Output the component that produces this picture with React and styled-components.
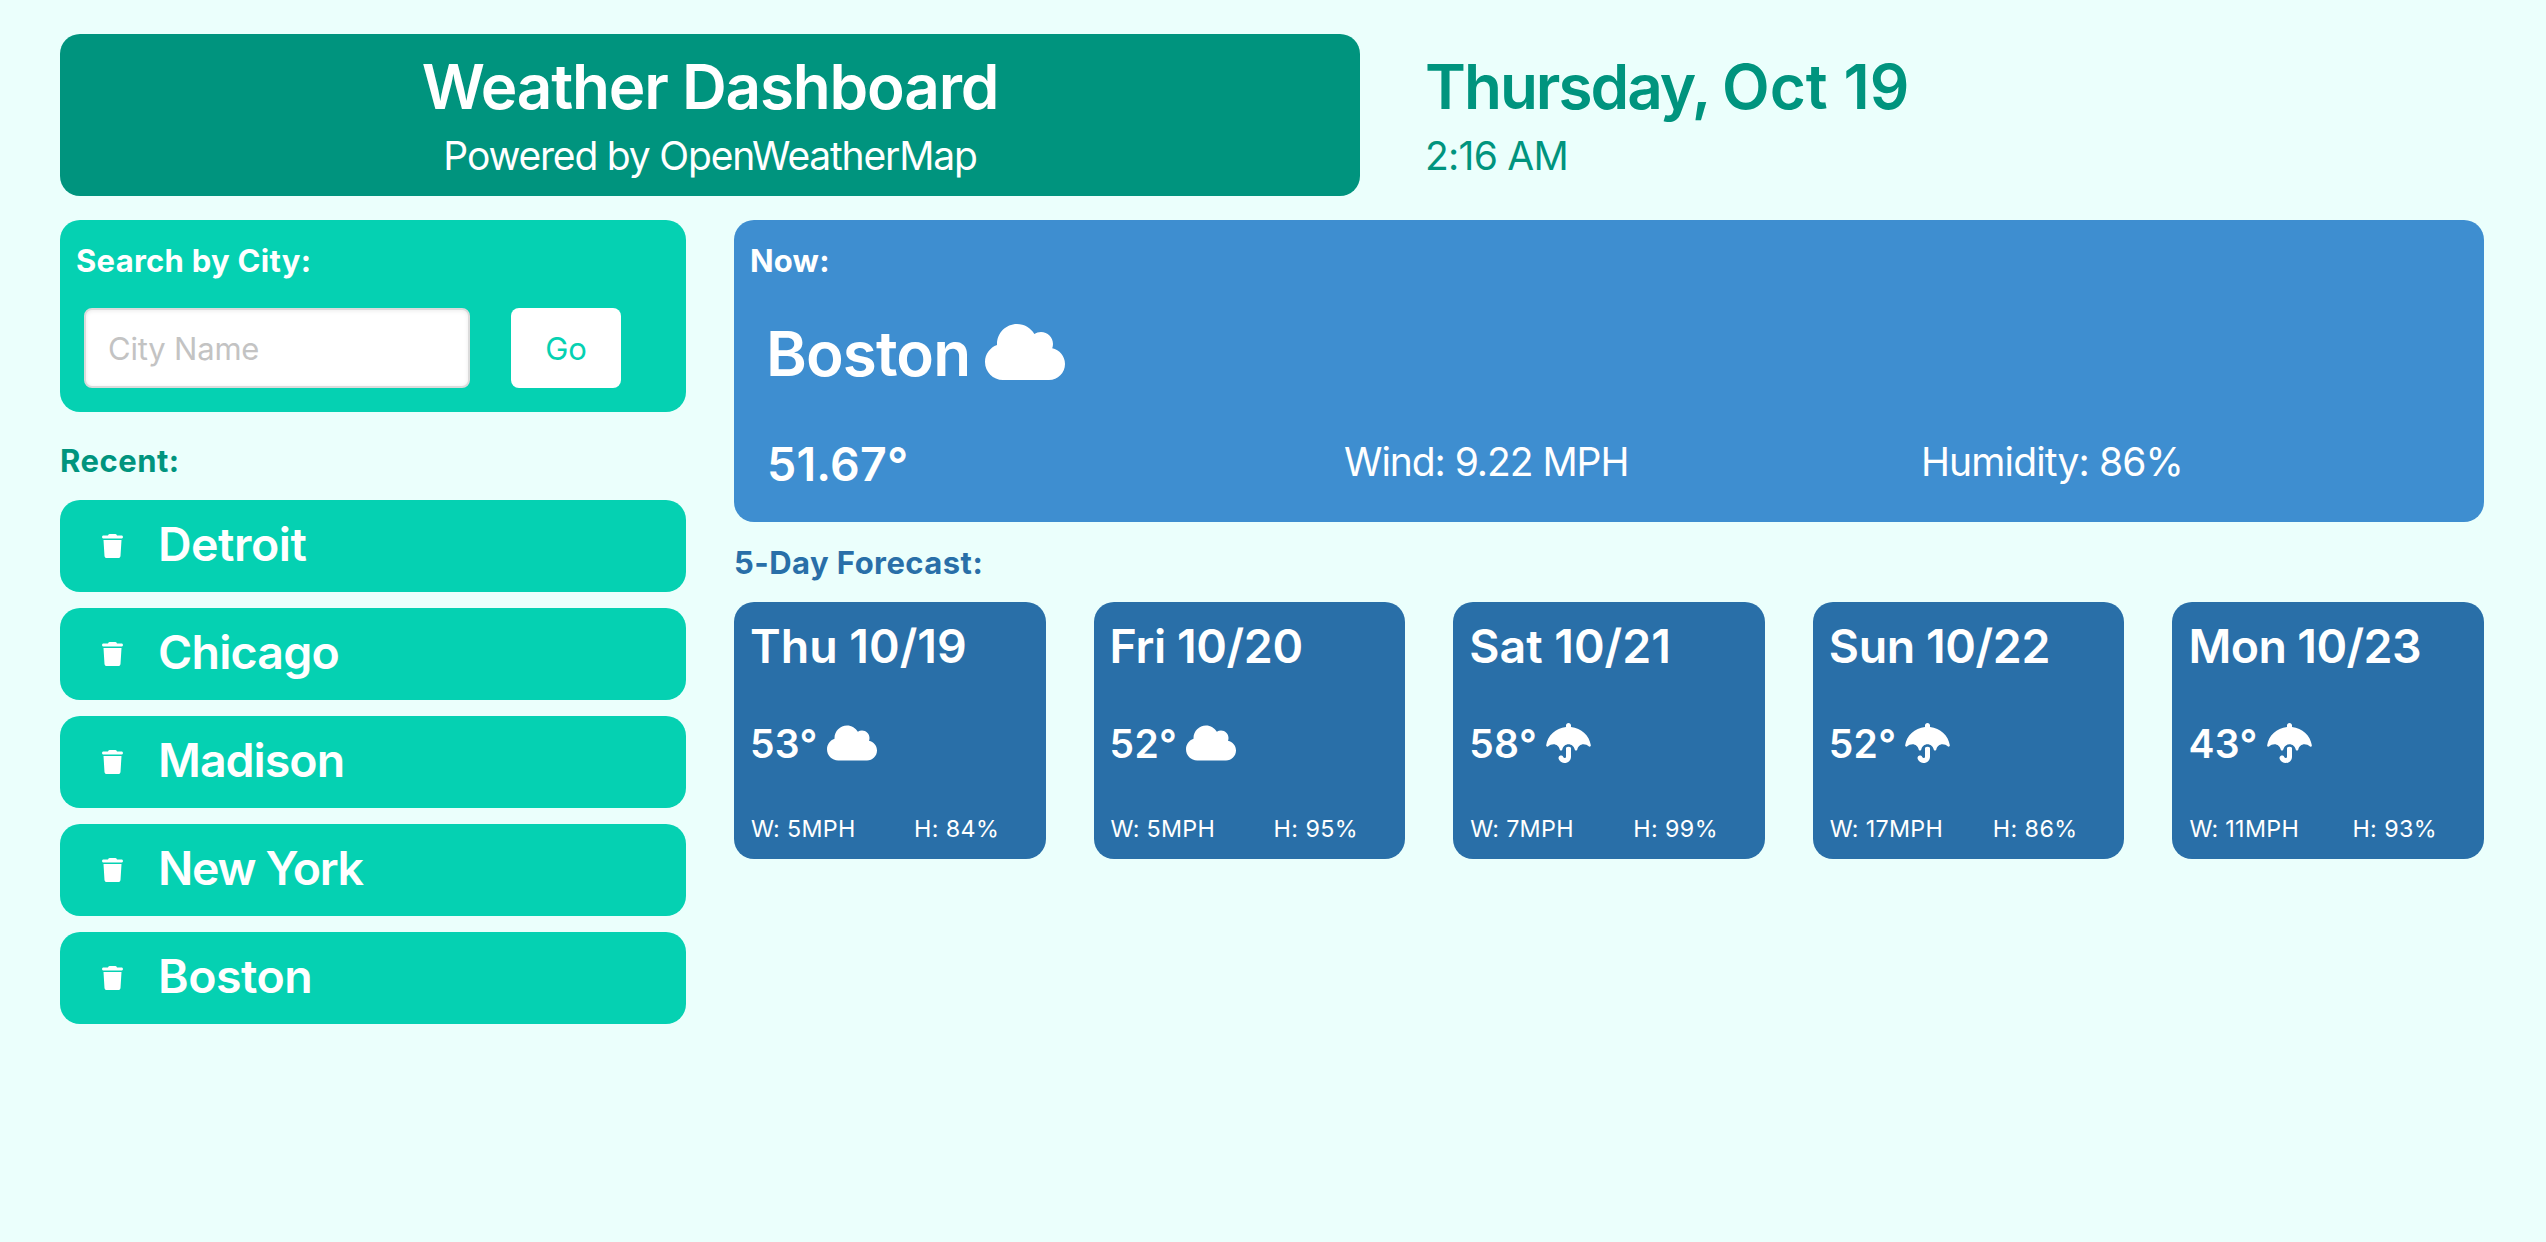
import React from "react";
import styled, { createGlobalStyle } from "styled-components";
import { FaCloud, FaUmbrella, FaTrash } from "react-icons/fa6";

const color = {
  page: "#ebfffc",
  primary: "#05d1b2",
  primaryDark: "#00947e",
  info: "#3e8ed0",
  infoDark: "#296fa8",
};

const GlobalStyle = createGlobalStyle`
  * { box-sizing: border-box; margin: 0; }
  body {
    min-height: 100vh;
    background: ${color.page};
    color: #fff;
    font-family: Inter, "Liberation Sans", sans-serif;
    -webkit-font-smoothing: antialiased;
  }
`;

const Text = styled.p`
  font-size: ${(p) => p.$size}px;
  font-weight: ${(p) => p.$weight || 400};
  line-height: ${(p) => p.$line}px;
  letter-spacing: ${(p) => p.$track || 0}px;
  white-space: nowrap;
`;

const Page = styled.main`
  padding: 34px 62px 0 60px;
`;

const Header = styled.header`
  display: grid;
  grid-template-columns: 1300px 1fr;
  gap: 65px;
  height: 162px;
  margin-bottom: 24px;
`;

const Banner = styled.div`
  padding-top: 16px;
  border-radius: 20px;
  background: ${color.primaryDark};
  text-align: center;
`;

const Clock = styled.div`
  padding-top: 16px;
  color: ${color.primaryDark};
`;

const Weekday = styled.span`
  letter-spacing: -2px;
`;

const Columns = styled.div`
  display: grid;
  grid-template-columns: 626px 1fr;
  gap: 48px;
`;

const Panel = styled.section`
  height: ${(p) => p.$height}px;
  padding: 16px;
  border-radius: 20px;
  background: ${(p) => p.$bg};
`;

const SectionLabel = styled.h2`
  margin: ${(p) => p.$margin || "0"};
  color: ${(p) => p.$color || "#fff"};
  font-size: 31px;
  font-weight: 700;
  line-height: 50px;
  letter-spacing: ${(p) => p.$track || 0}px;
`;

const SearchForm = styled.form`
  display: flex;
  gap: 41px;
  padding: 22px 0 0 8px;
`;

const CityInput = styled.input`
  width: 386px;
  height: 80px;
  padding: 0 22px;
  border: 2px solid #dbdbdb;
  border-radius: 8px;
  background: #fff;
  box-shadow: inset 0 1px 4px rgba(10, 10, 10, 0.08);
  font: 400 31px Inter, sans-serif;
  letter-spacing: -0.2px;
  &::placeholder { color: #c3c3c3; opacity: 1; }
`;

const GoButton = styled.button`
  width: 110px;
  height: 80px;
  border: 0;
  border-radius: 8px;
  background: #fff;
  color: ${color.primary};
  font: 400 31px Inter, sans-serif;
`;

const CityList = styled.ul`
  display: grid;
  gap: 16px;
  padding: 0;
  list-style: none;
`;

const CityItem = styled.li`
  display: flex;
  height: 92px;
  padding-left: 42px;
  border-radius: 20px;
  background: ${color.primary};
`;

const TrashIcon = styled(FaTrash)`
  width: 21px;
  height: 24px;
  margin: 34px 35px 0 0;
`;

const NowHeading = styled.div`
  display: flex;
  align-items: center;
  gap: 15px;
  height: 78px;
  margin-top: 27px;
  padding-left: 16px;
`;

const NowCity = styled(Text)`
  padding-top: 3px;
`;

const Metrics = styled.div`
  display: grid;
  grid-template-columns: 577px 577px 1fr;
  margin-top: 43px;
  padding-left: 17px;
`;

const Forecast = styled.div`
  display: grid;
  grid-template-columns: repeat(5, 1fr);
  gap: 48px;
`;

const TempRow = styled.div`
  display: flex;
  gap: 9px;
  margin: 40px 0 37px;
`;

const WeatherIcon = styled.svg`
  width: ${(p) => p.$w}px;
  height: ${(p) => p.$h}px;
  ${(p) => (p.$top ? `margin-top: ${p.$top}px;` : "")}
`;

const CardFooter = styled.div`
  display: grid;
  grid-template-columns: 163px 1fr;
  padding-left: 1px;
`;

const cities = [
  { name: "Detroit", track: -0.5 },
  { name: "Chicago", track: -0.8 },
  { name: "Madison", track: -1 },
  { name: "New York", track: -1.35 },
  { name: "Boston", track: -0.5 },
];

const days = [
  { day: "Thu 10/19", track: 0, temp: 53, icon: "cloud", wind: 5, humidity: 84 },
  { day: "Fri 10/20", track: -0.4, temp: 52, icon: "cloud", wind: 5, humidity: 95 },
  { day: "Sat 10/21", track: 0, temp: 58, icon: "rain", wind: 7, humidity: 99 },
  { day: "Sun 10/22", track: -0.4, temp: 52, icon: "rain", wind: 17, humidity: 86 },
  { day: "Mon 10/23", track: -0.6, temp: 43, icon: "rain", wind: 11, humidity: 93 },
];

function DayCard({ day, track, temp, icon, wind, humidity }) {
  return (
    <Panel $height={257} $bg={color.infoDark}>
      <Text $size={46.5} $weight={600} $line={56} $track={track}>{day}</Text>
      <TempRow>
        <Text $size={39} $weight={600} $line={60} $track={0.3}>{temp}°</Text>
        {icon === "cloud" ? (
          <WeatherIcon as={FaCloud} $w={50} $h={40} $top={9} />
        ) : (
          <WeatherIcon as={FaUmbrella} $w={45} $h={40} $top={9} />
        )}
      </TempRow>
      <CardFooter>
        <Text $size={23.3} $line={36} $track={0.3}>W: {wind}MPH</Text>
        <Text $size={23.3} $line={36} $track={0.4}>H: {humidity}%</Text>
      </CardFooter>
    </Panel>
  );
}

export default function App() {
  return (
    <>
      <GlobalStyle />
      <Page>
        <Header>
          <Banner>
            <Text as="h1" $size={62} $weight={600} $line={74} $track={-1.2}>Weather Dashboard</Text>
            <Text $size={39} $line={64} $track={-1.18}>Powered by OpenWeatherMap</Text>
          </Banner>
          <Clock>
            <Text $size={62} $weight={600} $line={74} $track={0.1}>
              <Weekday>Thursday, </Weekday>Oct 19
            </Text>
            <Text $size={39} $line={64} $track={-0.75}>2:16 AM</Text>
          </Clock>
        </Header>
        <Columns>
          <aside>
            <Panel $height={192} $bg={color.primary}>
              <SectionLabel $track={0.28}>Search by City:</SectionLabel>
              <SearchForm>
                <CityInput placeholder="City Name" />
                <GoButton type="button">Go</GoButton>
              </SearchForm>
            </Panel>
            <SectionLabel $margin="24px 0 14px" $color={color.primaryDark} $track={0.5}>Recent:</SectionLabel>
            <CityList>
              {cities.map(({ name, track }) => (
                <CityItem key={name}>
                  <TrashIcon />
                  <Text $size={46.5} $weight={600} $line={88} $track={track}>{name}</Text>
                </CityItem>
              ))}
            </CityList>
          </aside>
          <div>
            <Panel $height={302} $bg={color.info}>
              <SectionLabel $track={0.2}>Now:</SectionLabel>
              <NowHeading>
                <NowCity $size={62} $weight={600} $line={78} $track={-0.9}>Boston</NowCity>
                <WeatherIcon as={FaCloud} $w={80} $h={64} />
              </NowHeading>
              <Metrics>
                <Text $size={46.5} $weight={600} $line={60} $track={0.2}>51.67°</Text>
                <Text $size={39} $line={56} $track={-1.05}>Wind: 9.22 MPH</Text>
                <Text $size={39} $line={56} $track={-0.87}>Humidity: 86%</Text>
              </Metrics>
            </Panel>
            <SectionLabel $margin="16px 0 14px" $color={color.infoDark} $track={0.45}>5-Day Forecast:</SectionLabel>
            <Forecast>
              {days.map((d) => <DayCard key={d.day} {...d} />)}
            </Forecast>
          </div>
        </Columns>
      </Page>
    </>
  );
}
